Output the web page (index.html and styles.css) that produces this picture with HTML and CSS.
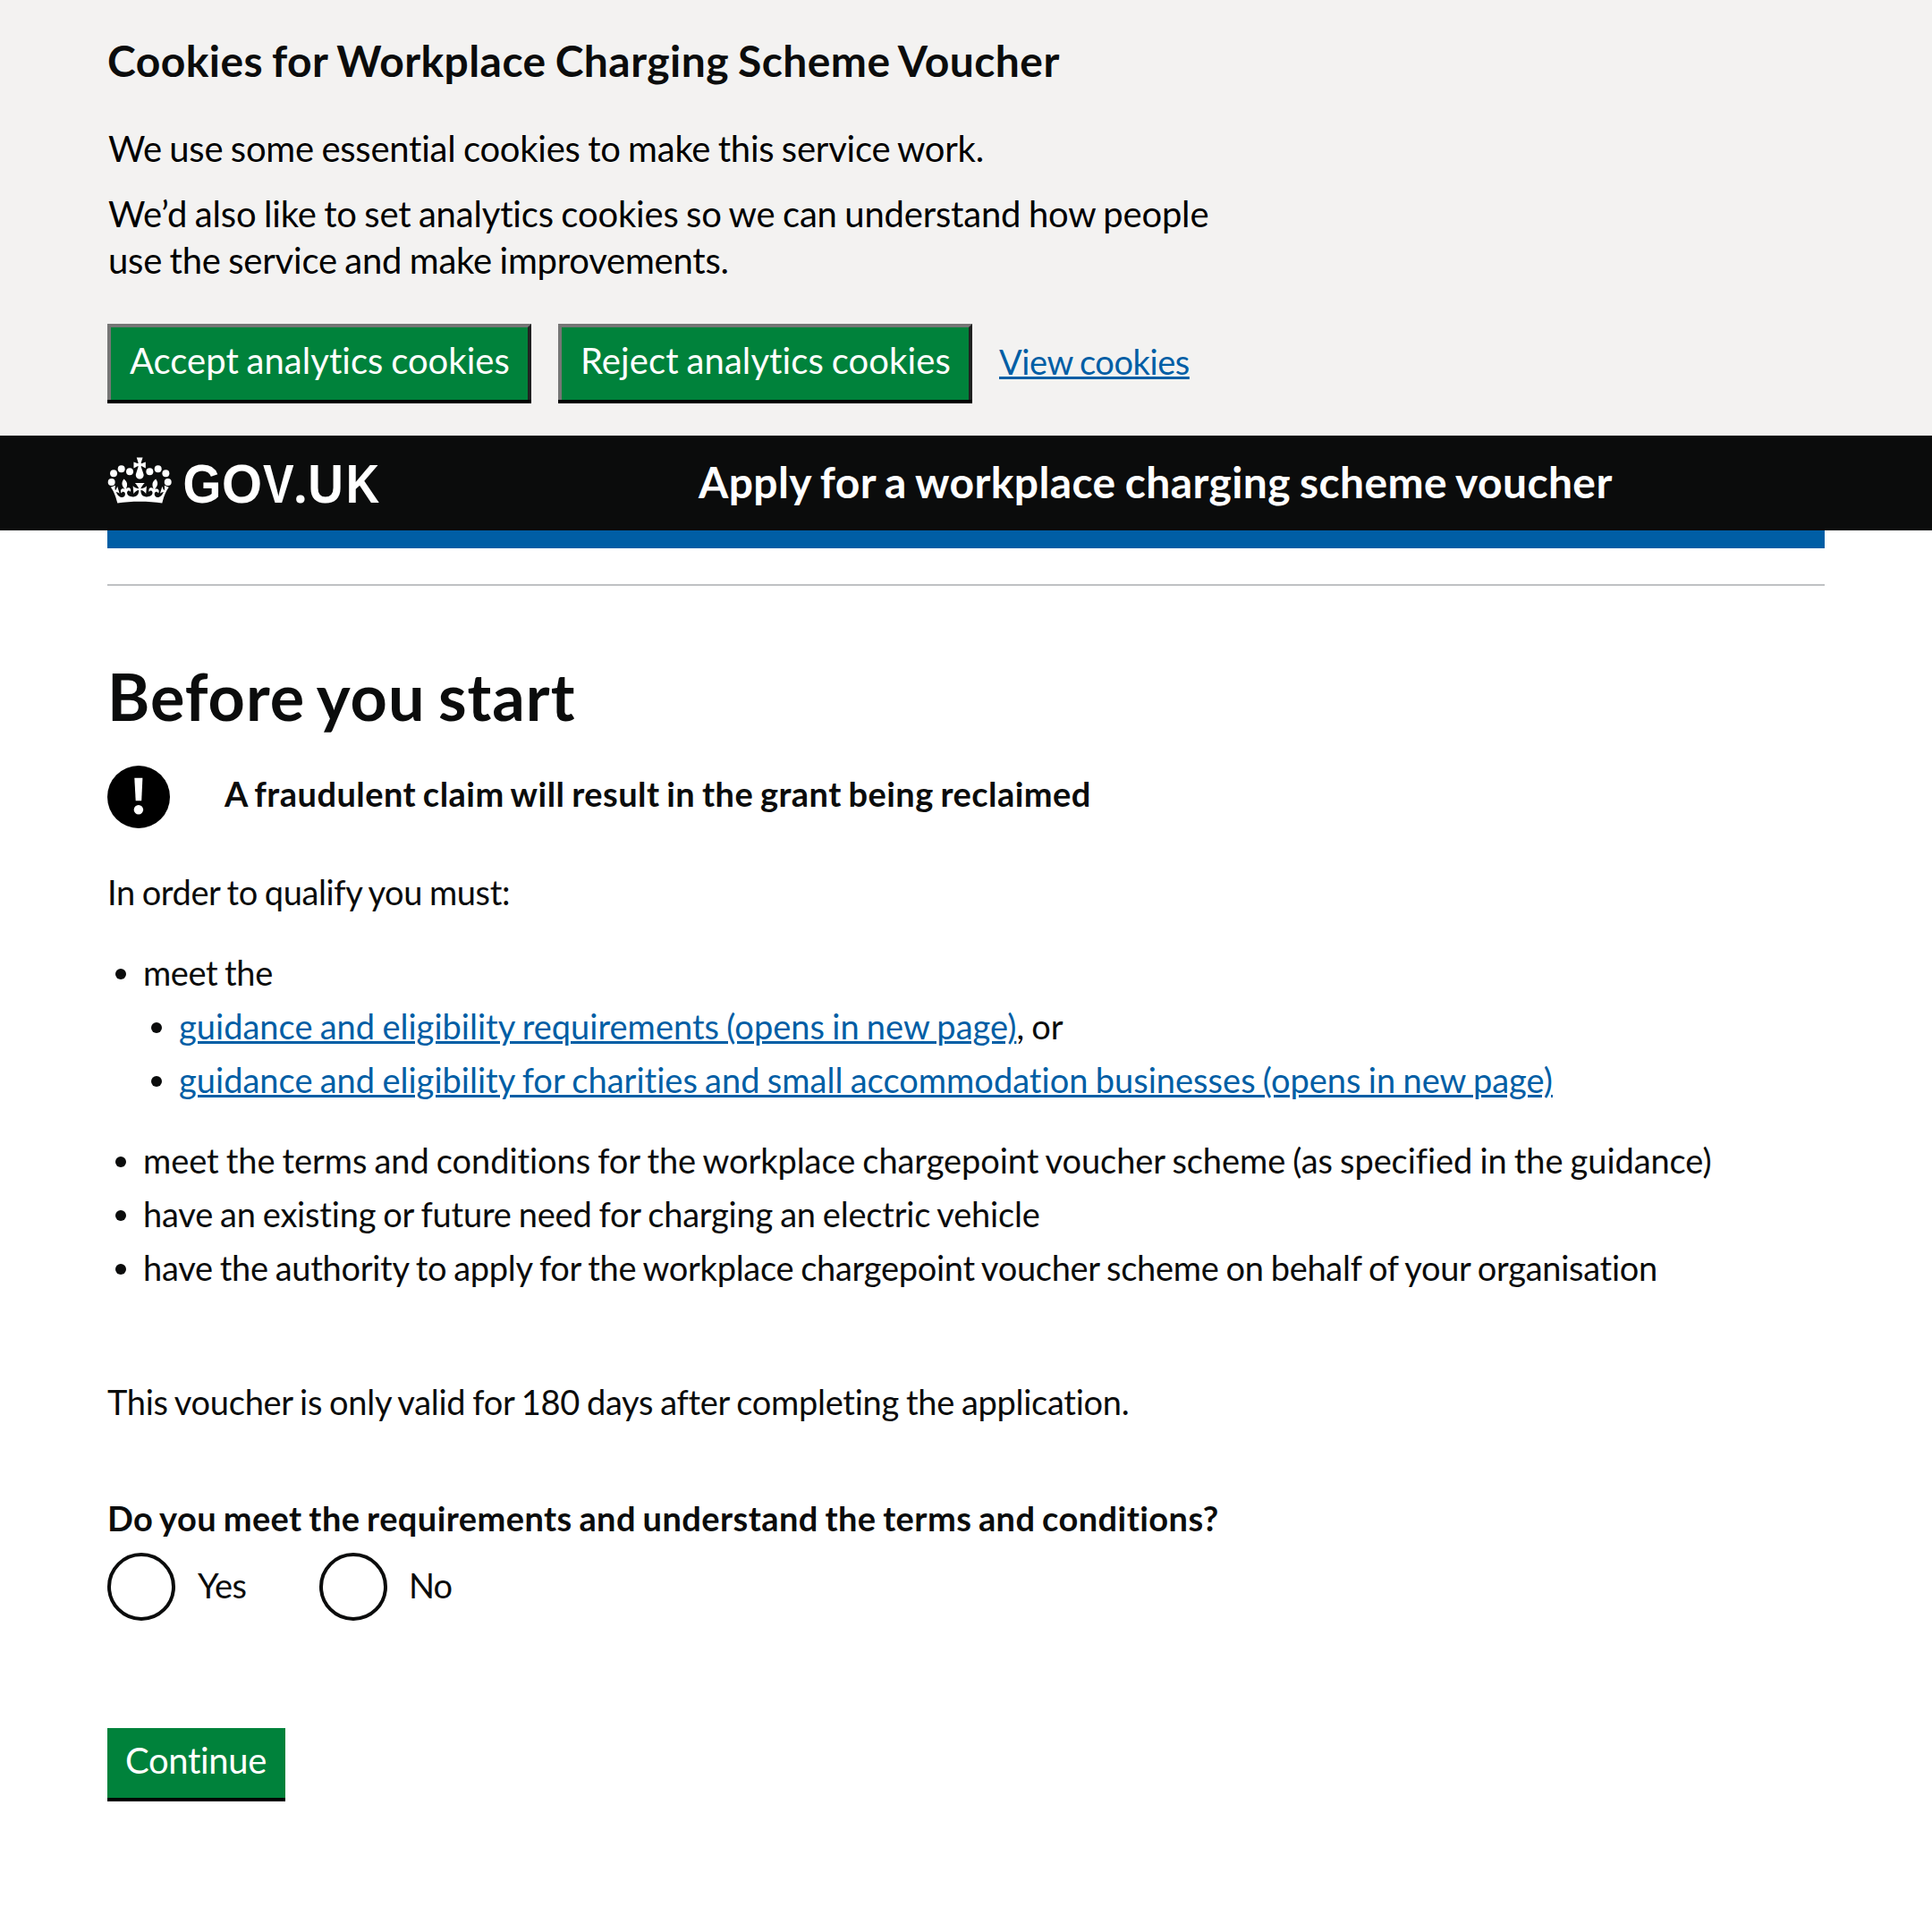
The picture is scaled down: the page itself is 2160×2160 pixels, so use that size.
FILE: index.html
```html
<!DOCTYPE html>
<html lang="en">
<head>
<meta charset="utf-8">
<title>Apply for a workplace charging scheme voucher</title>
<link rel="stylesheet" href="styles.css">
</head>
<body>
<section class="cookie-banner">
  <h2 class="cookie-title">Cookies for Workplace Charging Scheme Voucher</h2>
  <p class="cookie-text cookie-intro">We use some essential cookies to make this service work.</p>
  <p class="cookie-text cookie-more">We’d also like to set analytics cookies so we can understand how people<br><span class="second-line">use the service and make improvements.</span></p>
  <div class="cookie-actions">
    <button class="button button-raised accept" type="button">Accept analytics cookies</button>
    <button class="button button-raised reject" type="button">Reject analytics cookies</button>
    <a class="link view" href="#">View cookies</a>
  </div>
</section>

<header class="header">
  <svg class="logo" width="320" height="106" viewBox="0 0 320 106" role="img" aria-label="GOV.UK">
    <g fill="#fff" transform="translate(3.87 14.3) scale(1.02)">
      <circle cx="0.8" cy="36.9" r="3.9"/><circle cx="3.1" cy="27.4" r="3.9"/><circle cx="11.6" cy="22.5" r="3.9"/><circle cx="20.75" cy="25.5" r="3.9"/>
      <circle cx="62.6" cy="36.9" r="3.9"/><circle cx="60.3" cy="27.4" r="3.9"/><circle cx="51.8" cy="22.5" r="3.9"/><circle cx="42.65" cy="25.5" r="3.9"/>
      <path transform="translate(0 10.1)" d="M33.1 9.8c.2-.1.3-.3.5-.5l4.6 2.4V4.9l-4.6 1.5c-.1-.2-.3-.3-.5-.5L35 0h-6.7l1.9 5.9c-.2.1-.3.3-.5.5l-4.6-1.5v6.8l4.6-2.4c.1.2.3.3.5.5l-2.6 8c-.9 2.8 1.2 5.7 4.1 5.7 3 0 5.1-2.9 4.1-5.7z"/>
      <path d="M37 37.9s-3.4 3.8-4.1 6.1c2.2 0 4.2-.5 6.4-2.8l-.7 8.5c-2-2.8-4.4-4.1-5.7-3.8.1 3.1.5 6.7 5.8 7.2 3.7.3 6.7-1.5 7-3.8.4-2.6-2-4.3-3.7-1.6-1.4-4.5 2.4-6.1 4.9-3.2-1.9-4.5-1.8-7.7 2.4-10.9 3 4 2.6 7.3-1.2 11.1 2.4-1.3 6.2 0 4 4.6-1.2-2.8-3.7-2.2-4.2.2-.3 1.7.7 3.7 3 4.2 1.9.3 4.7-.9 7-5.9-1.3 0-2.4.7-3.9 1.7l2.4-8c.6 2.3 1.4 3.7 2.2 4.500.6-1.600.5-2.800 0-5.300l5 1.800c-2.600 3.600-5.200 8.700-7.300 17.500-7.400-1.100-15.700-1.700-24.500-1.700s-17.100.6-24.500 1.700c-2.100-8.900-4.700-13.900-7.300-17.500l5-1.800c-.5 2.500-.6 3.700 0 5.300.8-.8 1.600-2.300 2.200-4.500l2.400 8c-1.500-1-2.600-1.700-3.900-1.700 2.300 5 5.200 6.200 7 5.900 2.300-.4 3.300-2.400 3-4.200-.5-2.400-3-3.100-4.200-.2-2.200-4.600 1.600-6 4-4.600-3.700-3.700-4.200-7.100-1.200-11.100 4.200 3.200 4.300 6.400 2.400 10.900 2.500-2.800 6.300-1.300 4.900 3.200-1.800-2.700-4.100-1-3.700 1.600.3 2.300 3.300 4.100 7 3.800 5.400-.5 5.700-4.200 5.800-7.200-1.300-.2-3.700 1-5.700 3.800l-.7-8.500c2.200 2.300 4.200 2.700 6.400 2.800-.7-2.300-4.100-6.100-4.100-6.100H37z"/>
    </g>
    <g class="wordmark">
      <text transform="translate(84.6 75) scale(.905 1)">G</text>
      <text transform="translate(128 75) scale(.95 1)">O</text>
      <text transform="translate(174 75) scale(.85 1)">V</text>
      <text class="dot" transform="translate(208.2 75)">.</text>
      <text transform="translate(224.2 75) scale(.9 1)">U</text>
      <text transform="translate(266.7 75) scale(.85 1)">K</text>
    </g>
  </svg>
  <div class="service-name">Apply for a workplace charging scheme voucher</div>
</header>

<main class="page">
  <div class="blue-bar"></div>
  <hr class="rule">
  <h1 class="title">Before you start</h1>
  <div class="warning">
    <svg class="warning-icon" width="70" height="70" viewBox="0 0 70 70" aria-hidden="true">
      <circle cx="35" cy="35" r="35"/>
      <path fill="#fff" d="M30.300 13.700h9.100l-1.200 25.600h-6.500z"/>
      <circle fill="#fff" cx="34.900" cy="49.200" r="5.200"/>
    </svg>
    <strong class="warning-text">A fraudulent claim will result in the grant being reclaimed</strong>
  </div>
  <p class="intro">In order to qualify you must:</p>
  <ul class="list">
    <li><span class="t-meet">meet the</span>
      <ul class="list nested">
        <li class="t-link"><a class="link" href="#">guidance and eligibility requirements (opens in new page)</a>, or</li>
        <li class="t-link"><a class="link" href="#">guidance and eligibility for charities and small accommodation businesses (opens in new page)</a></li>
      </ul>
    </li>
    <li class="t-terms">meet the terms and conditions for the workplace chargepoint voucher scheme (as specified in the guidance)</li>
    <li class="t-need">have an existing or future need for charging an electric vehicle</li>
    <li class="t-auth">have the authority to apply for the workplace chargepoint voucher scheme on behalf of your organisation</li>
  </ul>
  <p class="validity">This voucher is only valid for 180 days after completing the application.</p>
  <h2 class="question">Do you meet the requirements and understand the terms and conditions?</h2>
  <div class="radios">
    <label class="radio"><span class="radio-ring"></span>Yes</label>
    <label class="radio"><span class="radio-ring"></span><span class="no">No</span></label>
  </div>
  <button class="button continue" type="button">Continue</button>
</main>
</body>
</html>
```
FILE: styles.css
```css
* { box-sizing: border-box; }
body {
  margin: 0;
  background: #fff;
  color: #0b0c0c;
  font: 38px/50px Lato, "Noto Sans", sans-serif;
  white-space: nowrap;
  word-spacing: -1.5px;
}
h1, h2, p, ul { margin: 0; padding: 0; }

.cookie-banner { padding: 38px 120px 0; height: 487px; background: #f3f2f1; }
.cookie-title { font-size: 48px; line-height: 60px; letter-spacing: .43px; word-spacing: -2px; }
.cookie-text { font-size: 40px; line-height: 52px; color: #000; }
.cookie-intro { margin-top: 42px; letter-spacing: -.24px; padding-left: 1px; }
.cookie-more { margin-top: 21px; letter-spacing: -.18px; padding-left: 1px; }
.second-line { letter-spacing: -.22px; }
.cookie-actions { display: flex; margin-top: 45px; font-size: 40px; line-height: 52px; }

.button {
  border: 0;
  background: #00823b;
  color: #fff;
  font: 40px/52px Lato, "Noto Sans", sans-serif;
  text-align: left;
  word-spacing: -1.5px;
  box-shadow: 0 4px 0 #000;
}
.button-raised {
  height: 85px;
  padding: 11px 0 18px 21px;
  border: 4px solid #767676;
  border-right-color: #212121;
  border-bottom: 0;
}
.accept { width: 474px; margin-right: 30px; letter-spacing: .03px; }
.reject { width: 463px; margin-right: 30px; letter-spacing: .1px; }
.link {
  color: #005ea5;
  text-decoration: underline;
  text-decoration-thickness: 3px;
  text-underline-offset: 2px;
}
.view { margin-top: 16px; font-size: 38px; letter-spacing: -.42px; text-decoration-skip-ink: none; }

.header { display: flex; height: 106px; padding: 0 120px; background: #0b0c0c; color: #fff; }
.logo { display: block; width: 320px; height: 106px; flex: none; }
.wordmark { font: bold 61px "Liberation Sans", Arial, sans-serif; fill: #fff; }
.dot { font-family: "Noto Sans", sans-serif; font-size: 54px; }
.service-name { margin: 22px 0 0 341px; font-size: 48px; line-height: 60px; font-weight: bold; letter-spacing: .39px; word-spacing: -2px; }

.page { padding: 0 120px 120px; }
.blue-bar { height: 20px; background: #005ea5; }
.rule { height: 2px; margin: 40px 0 0; border: 0; background: #bfc1c3; }
.title { margin-top: 83px; font-size: 72px; line-height: 80px; letter-spacing: .97px; word-spacing: -4px; }
.warning { display: flex; gap: 61px; height: 70px; margin-top: 38px; }
.warning-icon { display: block; flex: none; }
.warning-text { padding-top: 6px; letter-spacing: .46px; word-spacing: -2px; }
.intro { margin-top: 46px; letter-spacing: -.38px; }

.list { margin-top: 40px; padding-left: 40px; list-style: none; }
.list > li { margin-bottom: 10px; }
.list > li::before {
  content: "";
  float: left;
  width: 12px;
  height: 12px;
  margin: 21px 0 0 -31px;
  border-radius: 50%;
  background: #0b0c0c;
}
.nested { margin: 10px 0 40px; }
.t-meet { letter-spacing: -.4px; }
.t-link { letter-spacing: .02px; }
.t-terms { letter-spacing: -.07px; }
.t-need { letter-spacing: -.2px; }
.t-auth { letter-spacing: -.28px; }
.validity { margin-top: 100px; letter-spacing: -.28px; }
.question { margin-top: 80px; font-size: 38px; line-height: 50px; letter-spacing: .42px; word-spacing: -2px; }

.radios { display: flex; margin-top: 14px; }
.radio { display: flex; align-items: flex-start; gap: 25px; width: 237px; height: 76px; line-height: 72px; letter-spacing: -.5px; }
.radio-ring { width: 76px; height: 76px; border: 4px solid #0b0c0c; border-radius: 50%; }
.no { letter-spacing: -1px; margin-left: -1px; }
.continue { display: block; width: 199px; height: 78px; margin-top: 120px; padding: 10px 0 16px 20px; letter-spacing: -.35px; }
```
